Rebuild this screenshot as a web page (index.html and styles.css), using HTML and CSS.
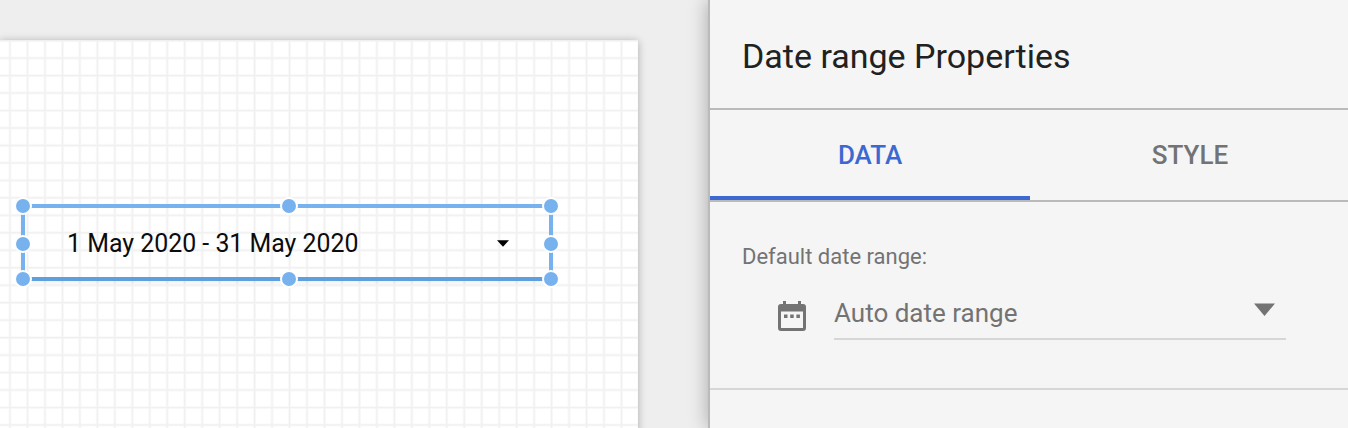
FILE: index.html
```html
<!DOCTYPE html>
<html lang="en">
<head>
<meta charset="utf-8">
<title>Date range Properties</title>
<link rel="stylesheet" href="styles.css">
</head>
<body>
<div class="app">
  <main class="workspace">
    <div class="page">
      <svg class="grid" width="638" height="388" aria-hidden="true">
        <defs>
          <pattern id="cell" x="8.5" y="16.5" width="17.47" height="17.47" patternUnits="userSpaceOnUse">
            <path d="M0 1.5H17.47M1.5 0V17.47" stroke="#000" stroke-opacity=".025" stroke-width="2.6"/>
            <path d="M0 1.5H17.47M1.5 0V17.47" stroke="#000" stroke-opacity=".035" stroke-width="1.2"/>
          </pattern>
        </defs>
        <rect width="638" height="388" fill="url(#cell)"/>
      </svg>
      <div class="widget">
        <span class="widget-text">1 May 2020 - 31 May 2020</span>
        <svg class="widget-arrow" width="12" height="7" viewBox="0 0 12 7"><path d="M0 .3H12L6 6.7Z"/></svg>
        <i class="handle top left"></i><i class="handle top center"></i><i class="handle top right"></i>
        <i class="handle middle left"></i><i class="handle middle right"></i>
        <i class="handle bottom left"></i><i class="handle bottom center"></i><i class="handle bottom right"></i>
      </div>
    </div>
  </main>
  <aside class="panel">
    <h1 class="title"><span class="title-text">Date range Properties</span></h1>
    <nav class="tabs">
      <a class="tab active">DATA</a>
      <a class="tab">STYLE</a>
    </nav>
    <section class="section">
      <div class="label"><span class="label-text">Default date range:</span></div>
      <div class="row">
        <svg class="calendar" width="28" height="30" viewBox="0 0 28 30">
          <path fill-rule="evenodd" d="M5 0h3v3h12V0h3v3h2q3 0 3 3v21q0 3-3 3H3q-3 0-3-3V6q0-3 3-3h2ZM3 10.5v16.5h22V10.5Z"/>
          <path d="M6 13.5h3.5v3.4H6zM12.2 13.5h3.5v3.4h-3.5zM18.4 13.5h3.5v3.4h-3.5z"/>
        </svg>
        <div class="select">
          <span class="select-text">Auto date range</span>
          <svg class="select-arrow" width="21" height="13" viewBox="0 0 21 13"><path d="M0 .4H21L10.5 13Z"/></svg>
        </div>
      </div>
    </section>
  </aside>
</div>
</body>
</html>
```
FILE: styles.css
```css
* { box-sizing: border-box; }
body {
  margin: 0;
  overflow: hidden;
  font-family: Roboto, "Liberation Sans", sans-serif;
}
.app {
  display: flex;
  width: 1348px;
  height: 428px;
  background: #eee;
}
.workspace {
  width: 708px;
  padding-top: 40px;
  overflow: hidden;
}
.page {
  position: relative;
  width: 638px;
  height: 420px;
  padding: 164px 0 0 21px;
  background: #fff;
  box-shadow: 0 1px 8px rgba(0, 0, 0, .28);
}
.grid {
  position: absolute;
  top: 0;
  left: 0;
}
.widget {
  position: relative;
  display: flex;
  align-items: center;
  justify-content: space-between;
  width: 532px;
  height: 77px;
  padding: 2px 40px 0 42px;
  border: 4px solid #77b2ef;
  border-bottom-color: #5f9fdd;
  box-shadow: 0 2px 3px rgba(0, 0, 0, .06);
}
.widget-text {
  font-size: 24.9px;
  line-height: 28px;
  white-space: nowrap;
  color: #0c0c0c;
}
.widget-arrow { fill: #000; }
.handle {
  position: absolute;
  width: 18px;
  height: 18px;
  border: 2px solid #fff;
  border-radius: 50%;
  background: #77b2ef;
}
.top { top: -11px; }
.middle { top: 27px; }
.bottom { bottom: -11px; }
.left { left: -11px; }
.center { left: 254.5px; }
.right { right: -10.5px; }
.panel {
  position: relative;
  width: 640px;
  border-left: 2px solid #bababa;
  background: #f5f5f5;
  box-shadow: 0 0 18px rgba(0, 0, 0, .3);
}
.title {
  display: flex;
  align-items: center;
  height: 110px;
  margin: 0;
  padding: 3px 0 0 32px;
  border-bottom: 2px solid #bababa;
  color: #212121;
  font-size: 34px;
  font-weight: 400;
}
.tabs {
  display: flex;
  height: 92px;
  border-bottom: 2px solid #bababa;
}
.tab {
  display: flex;
  flex: none;
  align-items: center;
  justify-content: center;
  width: 320px;
  height: 90px;
  padding-top: 4px;
  border-bottom: 4px solid transparent;
  color: #737373;
  font-size: 26px;
  font-weight: 500;
}
.active {
  border-color: #3c69d1;
  color: #3c69d1;
}
.section {
  height: 188px;
  padding: 42px 62px 0 32px;
  border-bottom: 2px solid #d6d6d6;
  color: #737373;
}
.label {
  height: 26px;
  font-size: 22px;
  line-height: 26px;
}
.row {
  display: flex;
  padding: 18px 0 0 36px;
}
.calendar {
  margin: 13px 28px 0 0;
  fill: #737373;
}
.select {
  display: flex;
  flex: 1;
  justify-content: space-between;
  height: 52px;
  padding: 10px 11px 0 0;
  border-bottom: 2px solid #d6d6d6;
  font-size: 26px;
  line-height: 30px;
}
.select-arrow {
  margin-top: 5px;
  fill: #737373;
}
```
